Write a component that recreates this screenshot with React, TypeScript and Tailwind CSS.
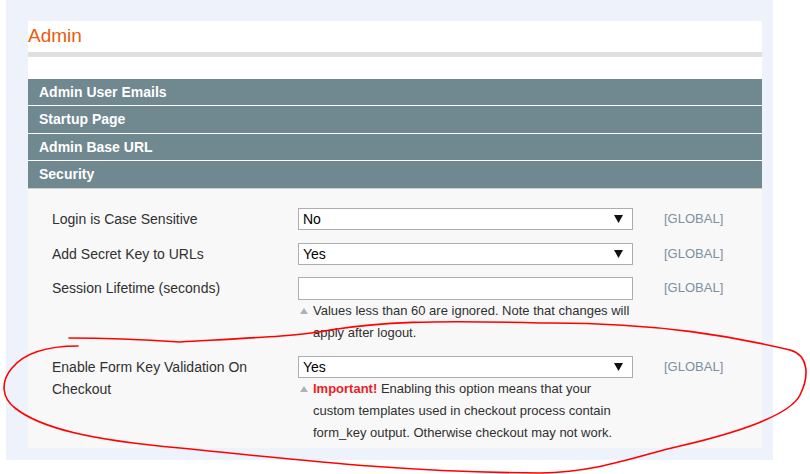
import React from 'react';

const SECTIONS: { title: string; h: string }[] = [
  { title: 'Admin User Emails', h: 'h-[26px]' },
  { title: 'Startup Page', h: 'h-[27px]' },
  { title: 'Admin Base URL', h: 'h-[26px]' },
  { title: 'Security', h: 'h-[27px]' },
];

const Caret = () => (
  <svg width="9" height="8" viewBox="0 0 9 8">
    <path d="M0 0H9L4.5 8Z" fill="#111" />
  </svg>
);

const NoteMark = () => (
  <svg width="8" height="6" viewBox="0 0 8 6">
    <path d="M4 0L8 6H0Z" fill="#a9b3b9" />
  </svg>
);

const Select = ({ value }: { value: string }) => (
  <div className="flex h-[22px] w-[335px] items-center justify-between border border-[#adadad] bg-white pl-[4px] pr-[9px] text-[14px] text-black">
    <span>{value}</span>
    <Caret />
  </div>
);

const Note = ({ children }: { children: React.ReactNode }) => (
  <div className="flex w-[335px] pl-[2px] text-[13px] leading-[22px] text-[#303030]">
    <div className="flex h-[22px] w-[13px] shrink-0 items-center">
      <NoteMark />
    </div>
    <div className="flex-1">{children}</div>
  </div>
);

const Row = ({
  label,
  children,
  className,
}: {
  label: string;
  children: React.ReactNode;
  className?: string;
}) => (
  <div className={`flex items-start ${className ?? ''}`}>
    <div className="w-[246px] pr-[40px] text-[14px] leading-[22px] text-[#303030]">{label}</div>
    <div className="w-[335px]">{children}</div>
    <div className="ml-[31px] text-[13px] leading-[22px] text-[#7d8fa2]">[GLOBAL]</div>
  </div>
);

export default function App() {
  return (
    <div className="relative h-[474px] w-[810px] overflow-hidden bg-white font-['Liberation_Sans',Arial,sans-serif]">
      <div className="ml-[6px] w-[767px] bg-[#eef2fa] pb-[12px] pl-[22px] pr-[11px] pt-[21px]">
        <div className="bg-white">
          <div className="flex h-[31px] items-center text-[19px] text-[#eb5a0d]">Admin</div>
          <div className="h-[5px] bg-[#dfdfdf]" />
          <div className="h-[22px]" />

          <div className="flex flex-col gap-px">
            {SECTIONS.map((s) => (
              <div
                key={s.title}
                className={`flex items-center bg-[#70888f] pl-[11px] text-[14px] font-bold text-white ${s.h}`}
              >
                {s.title}
              </div>
            ))}
          </div>
          <div className="h-px bg-[#cfcfcf]" />

          {/* Security fields */}
          <div className="bg-[#f8f8f8] pb-[4px] pl-[24px] pt-[19px]">
            <Row label="Login is Case Sensitive" className="mb-[13px]">
              <Select value="No" />
            </Row>
            <Row label="Add Secret Key to URLs" className="mb-[12px]">
              <Select value="Yes" />
            </Row>
            <Row label="Session Lifetime (seconds)" className="mb-[12px]">
              <div className="h-[23px] w-[335px] border border-[#adadad] bg-white" />
              <Note>Values less than 60 are ignored. Note that changes will apply after logout.</Note>
            </Row>
            <Row label="Enable Form Key Validation On Checkout">
              <Select value="Yes" />
              <Note>
                <span className="font-bold text-[#ee1c25]">Important!</span> Enabling this option means that your
                custom templates used in checkout process contain form_key output. Otherwise checkout may not work.
              </Note>
            </Row>
          </div>
        </div>
      </div>

      {/* hand-drawn annotation */}
      <svg className="pointer-events-none absolute left-0 top-0" width="810" height="474" viewBox="0 0 810 474">
        <path
          d="M78,346 C50,346 25,352 12,368 C0,382 2,398 15,408 C40,428 90,440 180,448 C300,460 400,472 540,473 C600,472 640,455 680,446 C740,432 790,415 800,395 C810,375 808,355 790,350 C740,338 660,322 540,323 C430,320 380,322 330,330 C300,336 250,338 180,342 C120,338 90,338 69,338"
          fill="none"
          stroke="#f00"
          strokeWidth="1.6"
          strokeLinecap="round"
        />
      </svg>
    </div>
  );
}
